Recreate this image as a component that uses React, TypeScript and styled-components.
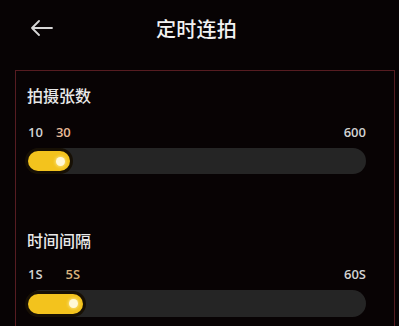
import React from "react";
import styled, { createGlobalStyle } from "styled-components";

const Global = createGlobalStyle`
  html, body {
    margin: 0;
    padding: 0;
    background: #070304;
  }
  body {
    width: 399px;
    height: 326px;
    overflow: hidden;
    font-family: "Noto Sans CJK SC", "Noto Sans", sans-serif;
  }
`;

const Page = styled.div`
  width: 399px;
  height: 326px;
  display: flex;
  flex-direction: column;
  background: #070304;
`;

const Header = styled.header`
  height: 56px;
  display: grid;
  grid-template-columns: 1fr auto 1fr;
  align-items: center;
`;

const Back = styled.div`
  padding-left: 30px;
  display: flex;
  align-items: center;
  height: 24px;
`;

const Title = styled.h1`
  margin: 0;
  font-size: 20px;
  font-weight: 500;
  color: #f2f2f2;
  line-height: 26px;
  letter-spacing: 0.3px;
  transform: translate(-3px, 1px);
`;

const Card = styled.main`
  margin: 14px 0 0 15px;
  width: 380px;
  flex: 1;
  box-sizing: border-box;
  border: 1px solid #561c21;
  border-bottom: none;
  padding: 12px 28px 0 11px;
  background: #080304;
  display: flex;
  flex-direction: column;
`;

const Section = styled.section<{ $top: number }>`
  display: flex;
  flex-direction: column;
  margin-top: ${(p) => p.$top}px;
`;

const SectionTitle = styled.h2`
  margin: 0;
  font-size: 16px;
  line-height: 24px;
  font-weight: 500;
  color: #e9e9e9;
`;

const Labels = styled.div<{ $gap: number }>`
  display: flex;
  align-items: center;
  margin-top: ${(p) => p.$gap}px;
  padding-left: 1px;
  height: 18px;
  font-family: "Open Sans", "Noto Sans", sans-serif;
  font-size: 13px;
  font-weight: 600;
`;

const Bound = styled.span`
  color: #d2d2d2;
`;

const Current = styled.span<{ $offset: number; $color: string }>`
  margin-left: ${(p) => p.$offset}px;
  color: ${(p) => p.$color};
`;

const Spacer = styled.span`
  flex: 1;
`;

const Track = styled.div<{ $h: number }>`
  margin-top: 7px;
  height: ${(p) => p.$h}px;
  border-radius: ${(p) => p.$h / 2}px;
  background: #252525;
  display: flex;
  align-items: center;
  padding-left: 1px;
`;

const Fill = styled.div`
  position: relative;
  height: 20px;
  border-radius: 10px;
  background: #f3c31d;
  box-shadow: 0 0 0 3px #171005;
`;

const Knob = styled.span`
  position: absolute;
  right: 5px;
  top: 50%;
  width: 9px;
  height: 9px;
  margin-top: -4.5px;
  border-radius: 50%;
  background: #fff8d6;
  box-shadow: 0 0 3px 1px rgba(255, 240, 170, 0.6);
`;

type SliderProps = {
  title: string;
  min: string;
  value: string;
  max: string;
  valueOffset: number;
  valueColor: string;
  fill: number;
  top: number;
  gap: number;
  trackH: number;
};

function Slider(p: SliderProps) {
  return (
    <Section $top={p.top}>
      <SectionTitle>{p.title}</SectionTitle>
      <Labels $gap={p.gap}>
        <Bound>{p.min}</Bound>
        <Current $offset={p.valueOffset} $color={p.valueColor}>
          {p.value}
        </Current>
        <Spacer />
        <Bound>{p.max}</Bound>
      </Labels>
      <Track $h={p.trackH}>
        <Fill style={{ width: p.fill }}>
          <Knob />
        </Fill>
      </Track>
    </Section>
  );
}

export default function App() {
  return (
    <>
      <Global />
      <Page>
        <Header>
          <Back>
            <svg width="23" height="16" viewBox="0 0 23 16" fill="none">
              <path
                d="M22 8H2M9 1L2 8l7 7"
                stroke="#d6d6d6"
                strokeWidth="1.8"
                strokeLinecap="round"
                strokeLinejoin="round"
              />
            </svg>
          </Back>
          <Title>定时连拍</Title>
          <div />
        </Header>
        <Card>
          <Slider
            title="拍摄张数"
            min="10"
            value="30"
            max="600"
            valueOffset={13}
            valueColor="#e9bc98"
            fill={42}
            top={0}
            gap={16}
            trackH={26}
          />
          <Slider
            title="时间间隔"
            min="1S"
            value="5S"
            max="60S"
            valueOffset={23}
            valueColor="#d8b27c"
            fill={55}
            top={54}
            gap={13}
            trackH={27}
          />
        </Card>
      </Page>
    </>
  );
}
